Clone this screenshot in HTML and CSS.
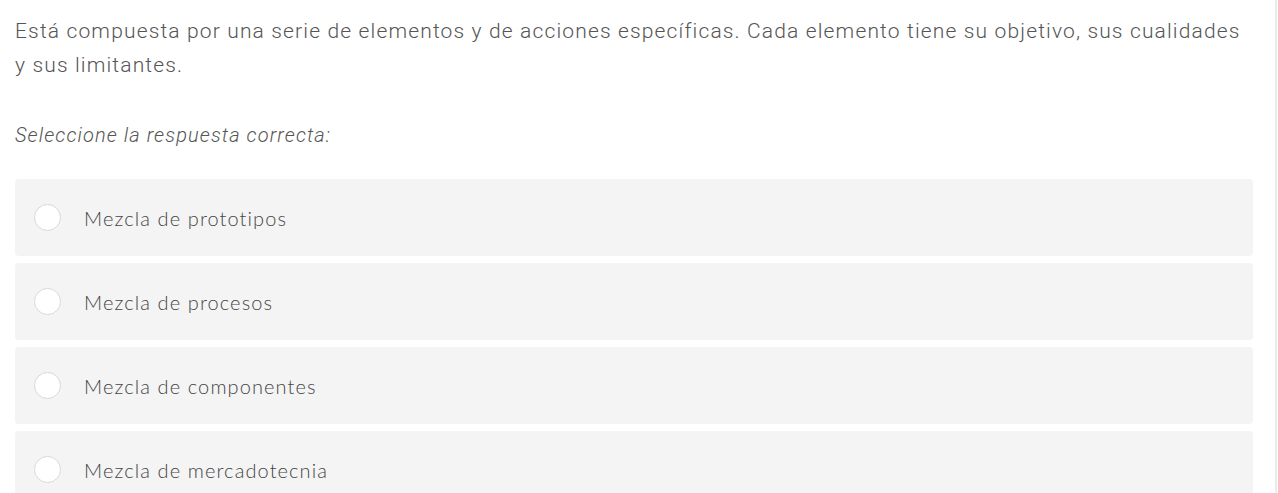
FILE: index.html
```html
<!DOCTYPE html>
<html lang="es">
<head>
    <meta charset="UTF-8">
    <meta name="viewport" content="width=device-width, initial-scale=1.0">
    <title>Pregunta</title>
    <link rel="stylesheet" href="styles.css">
</head>
<body>
    <div id="outer">
        <p class="question">Está compuesta por una serie de elementos y de acciones específicas. Cada elemento tiene su objetivo, sus cualidades y sus limitantes.</p>
        <p class="hint">Seleccione la respuesta correcta:</p>
        <ul class="answers">
            <li class="answer"><span class="radio"></span><span class="label">Mezcla de prototipos</span></li>
            <li class="answer"><span class="radio"></span><span class="label">Mezcla de procesos</span></li>
            <li class="answer"><span class="radio"></span><span class="label">Mezcla de componentes</span></li>
            <li class="answer"><span class="radio"></span><span class="label">Mezcla de mercadotecnia</span></li>
        </ul>
    </div>
</body>
</html>
```

FILE: styles.css
```css
body{
    margin: 0;
    background-color: white;
}

#outer{
    width: 1238px;
    height: 493px;
    padding: 0 22px 0 15px;
    border-right: 2px solid #ececec;
    overflow: hidden;
    font-family: Roboto, "Liberation Sans", sans-serif;
    color: #555;
}

.question{
    margin: 0;
    padding-top: 14px;
    font-size: 21px;
    font-weight: 300;
    line-height: 34px;
    letter-spacing: 1.15px;
}

.hint{
    margin: 41px 0 0;
    font-size: 20px;
    font-weight: 300;
    font-style: italic;
    line-height: 24px;
    letter-spacing: 1.1px;
}

.answers{
    list-style: none;
    margin: 32px 0 0;
    padding: 0;
}

.answer{
    display: flex;
    align-items: center;
    height: 77px;
    margin-bottom: 7px;
    padding-left: 19px;
    background-color: #f4f4f4;
    border-radius: 4px;
}

.radio{
    width: 25px;
    height: 25px;
    border: 1px solid #d8d8d8;
    border-radius: 50%;
    background-color: white;
    margin-right: 23px;
}

.label{
    font-family: Lato, "Open Sans", sans-serif;
    font-size: 20px;
    font-weight: 300;
    letter-spacing: 1.1px;
    color: #444;
}
```
